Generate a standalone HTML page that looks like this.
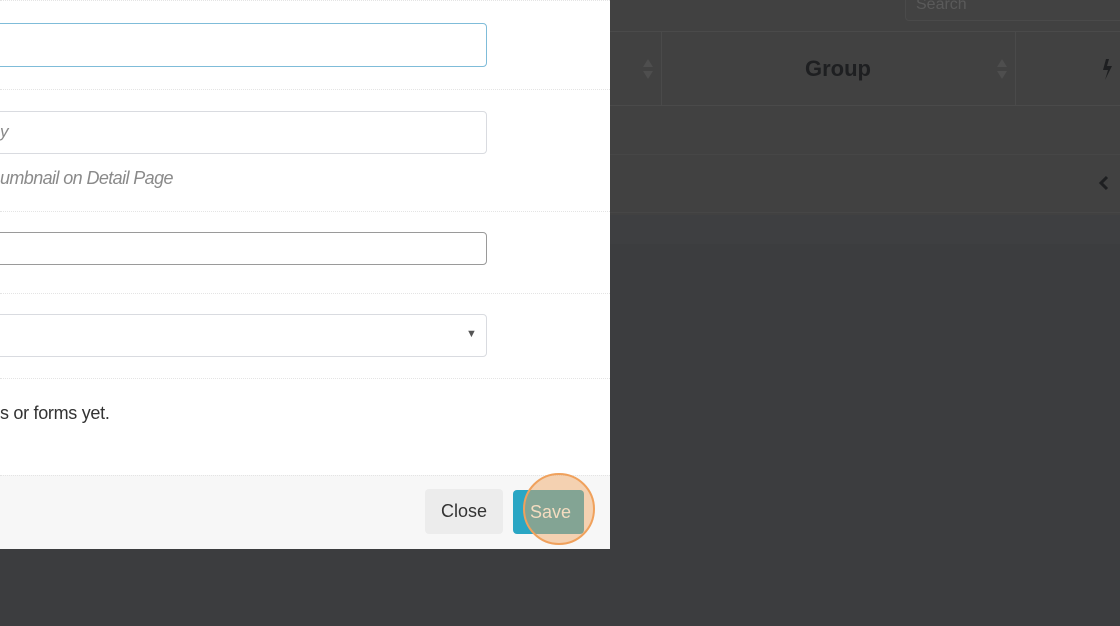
<!DOCTYPE html>
<html><head><style>
body{margin:0;width:1120px;height:626px;background:#3c3d3f;position:relative;overflow:hidden;font-family:"Liberation Sans",sans-serif}
.a{position:absolute}
</style></head><body>
<div class="a" style="left:610px;top:0;width:510px;height:215px;background:#414141"></div>
<div class="a" style="left:610px;top:215px;width:510px;height:29px;background:#3e3f41"></div>
<div class="a" style="left:610px;top:244px;width:510px;height:382px;background:#3c3d3f"></div>
<div class="a" style="left:905px;top:-10px;width:230px;height:31px;border:1px solid #4a4a4a;border-radius:4px;background:#424242;color:#5a5a5a;font-size:16px;line-height:28px;padding-left:10px;box-sizing:border-box">Search</div>
<div class="a" style="left:610px;top:31px;width:510px;height:1px;background:#4a4a4a"></div>
<div class="a" style="left:610px;top:105px;width:510px;height:1px;background:#4a4a4a"></div>
<div class="a" style="left:661px;top:31px;width:1px;height:74px;background:#4a4a4a"></div>
<div class="a" style="left:1015px;top:31px;width:1px;height:74px;background:#4a4a4a"></div>
<div class="a" style="left:610px;top:154px;width:510px;height:1px;background:#464646"></div>
<div class="a" style="left:610px;top:212px;width:510px;height:1px;background:#464646"></div>
<div class="a" style="left:805px;top:56px;font-size:22px;font-weight:bold;color:#1e1f21">Group</div>
<svg class="a" style="left:642px;top:59px" width="12" height="20"><path d="M6 0 L11 8 L1 8Z M6 20 L11 12 L1 12Z" fill="#4e4e4e"/></svg>
<svg class="a" style="left:996px;top:59px" width="12" height="20"><path d="M6 0 L11 8 L1 8Z M6 20 L11 12 L1 12Z" fill="#4e4e4e"/></svg>
<svg class="a" style="left:1100px;top:58px" width="14" height="24"><path d="M6 1 L3 12 L8 12 L5 22 L12 8 L7 8 L9 1Z" fill="#1e1f21"/></svg>
<svg class="a" style="left:1098px;top:175px" width="12" height="16"><path d="M9 2 L3 8 L9 14" stroke="#1e1f21" stroke-width="3" fill="none"/></svg>

<div class="a" style="left:0;top:0;width:610px;height:548px;background:#fff"></div>
<div class="a" style="left:0;top:0;width:610px;height:1px;border-top:1px dotted #e4e4e4"></div>
<div class="a" style="left:-5px;top:23px;width:492px;height:44px;border:1px solid #7fbcd9;border-radius:4px;box-sizing:border-box"></div>
<div class="a" style="left:0;top:89px;width:610px;border-top:1px dotted #e4e4e4"></div>
<div class="a" style="left:-5px;top:111px;width:492px;height:43px;border:1px solid #d9dbe0;border-radius:4px;box-sizing:border-box"></div>
<div class="a" style="left:0;top:122px;font-size:17px;color:#888;font-style:italic">y</div>
<div class="a" style="left:0;top:168px;font-size:18px;color:#8a8a8a;font-style:italic;letter-spacing:-0.6px">umbnail on Detail Page</div>
<div class="a" style="left:0;top:211px;width:610px;border-top:1px dotted #e4e4e4"></div>
<div class="a" style="left:-5px;top:232px;width:492px;height:33px;border:1px solid #9a9a9a;border-radius:4px;box-sizing:border-box"></div>
<div class="a" style="left:0;top:293px;width:610px;border-top:1px dotted #e4e4e4"></div>
<div class="a" style="left:-5px;top:314px;width:492px;height:43px;border:1px solid #d9dbe0;border-radius:4px;box-sizing:border-box"></div>
<div class="a" style="left:466px;top:328px;font-size:11px;color:#555">▼</div>
<div class="a" style="left:0;top:378px;width:610px;border-top:1px dotted #e4e4e4"></div>
<div class="a" style="left:0;top:403px;font-size:18px;color:#333;letter-spacing:-0.3px">s or forms yet.</div>
<div class="a" style="left:0;top:475px;width:610px;height:73px;background:#f7f7f7;border-top:1px dotted #e4e4e4"></div>
<div class="a" style="left:425px;top:489px;width:78px;height:45px;background:#ececec;border-radius:4px;font-size:18px;color:#333;text-align:center;line-height:45px">Close</div>
<div class="a" style="left:513px;top:490px;width:71px;height:44px;background:#2aa6c4;border-radius:4px"></div>
<div class="a" style="left:523px;top:473px;width:68px;height:68px;border:2px solid #f0a15c;border-radius:50%;background:rgba(240,161,92,0.45)"></div>
<div class="a" style="left:530px;top:502px;font-size:18px;color:#f4dcc0">Save</div>
</body></html>
